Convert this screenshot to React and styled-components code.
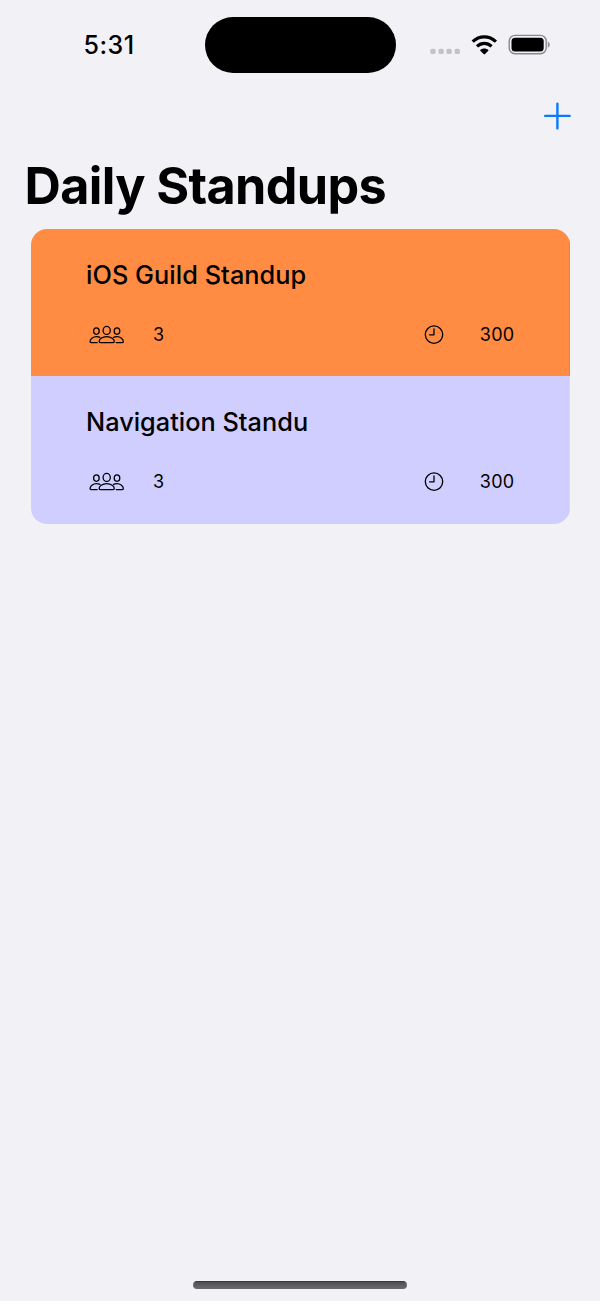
import React from "react";
import styled, { createGlobalStyle } from "styled-components";

const GlobalStyle = createGlobalStyle`
  * { box-sizing: border-box; }
  body { margin: 0; background: #f2f1f6; }
`;

const Screen = styled.main`
  display: flex;
  flex-direction: column;
  width: 600px;
  height: 1301px;
  overflow: hidden;
  background: #f2f1f6;
  color: #000;
  font-family: Inter, "Liberation Sans", sans-serif;
`;

const StatusBar = styled.header`
  display: flex;
  align-items: center;
  height: 90px;
  padding: 0 49px 0 83.5px;
`;

const Time = styled.time`
  width: 121px;
  font-size: 25px;
  line-height: 30px;
  font-weight: 540;
  letter-spacing: 0.5px;
  white-space: nowrap;
`;

const Island = styled.div`
  width: 191px;
  height: 56px;
  border-radius: 28px;
  background: #000;
`;

const StatusIcons = styled.svg`
  display: block;
  width: 122px;
  height: 24px;
  margin-left: auto;
`;

const Toolbar = styled.nav`
  display: flex;
  justify-content: flex-end;
  height: 70px;
  padding: 12px 28px 0 0;
`;

const AddButton = styled.button`
  display: block;
  width: 28px;
  height: 28px;
  padding: 0;
  border: 0;
  background: none;
  svg { display: block; }
`;

const Title = styled.h1`
  height: 69px;
  margin: 0;
  padding: 0 0 0 24.5px;
  font-size: 50.3px;
  line-height: 52px;
  font-weight: 670;
  letter-spacing: -0.64px;
  white-space: nowrap;
`;

const List = styled.section`
  margin: 0 30.5px;
  border-radius: 16px;
  overflow: hidden;
`;

const Card = styled.article`
  display: flex;
  flex-direction: column;
  justify-content: space-between;
  height: 147.3px;
  padding: 30px 55px 29.2px 55.5px;
  background: ${({ $color }) => $color};
  box-shadow: inset -1px 0 ${({ $edge }) => $edge};
`;

const CardTitle = styled.h2`
  margin: 0;
  font-size: 25.3px;
  line-height: 32px;
  font-weight: 550;
  letter-spacing: ${({ $tracking }) => $tracking}px;
  white-space: nowrap;
`;

const Details = styled.div`
  display: flex;
  justify-content: space-between;
  align-items: center;
  height: 24px;
  padding-left: 3px;
`;

const Label = styled.span`
  display: flex;
  align-items: center;
  gap: ${({ $gap }) => $gap}px;
  font-size: 18px;
  line-height: 24px;
  font-weight: 370;
  letter-spacing: 0.3px;
  svg { display: block; }
`;

const HomeArea = styled.footer`
  display: flex;
  justify-content: center;
  margin-top: auto;
  padding-bottom: 12px;
`;

const HomeIndicator = styled.div`
  width: 214px;
  height: 8px;
  border-radius: 4px;
  border: 1px solid #69696c;
  border-top-color: #39393b;
  background: linear-gradient(#505052, #68686a);
`;

function People() {
  return (
    <svg width="36" height="20" viewBox="0 0 36 20" fill="none" stroke="currentColor" strokeWidth="1.3" strokeLinejoin="round" strokeLinecap="round">
      <ellipse cx="17.7" cy="5.4" rx="3.6" ry="4" />
      <path d="M12 17.7q-1.9 0-1.9-1.2c0-2.2 3-4.9 7.6-4.9s7.6 2.7 7.6 4.9q0 1.2-1.9 1.2Z" />
      <ellipse cx="7.4" cy="6.1" rx="2.8" ry="3.2" />
      <ellipse cx="28" cy="6.1" rx="2.8" ry="3.2" />
      <path d="M8.2 17.6H2.3q-1.2 0-1.2-1.2c0-2.2 2.7-4.7 6.4-4.7q2 0 3.3.7M27.2 17.6h5.9q1.2 0 1.2-1.2c0-2.2-2.7-4.7-6.4-4.7q-2 0-3.3.7" />
    </svg>
  );
}

function Clock() {
  return (
    <svg width="20" height="20" viewBox="0 0 20 20" fill="none" stroke="currentColor" strokeLinecap="round" strokeLinejoin="round">
      <circle cx="10" cy="9.6" r="8.7" strokeWidth="1.35" />
      <path d="M10 4v5.8H5.6" strokeWidth="1.3" />
    </svg>
  );
}

function Status() {
  return (
    <StatusIcons viewBox="429 33 122 24" fill="none">
      <g fill="#c3c2c7">
        {[430.4, 438.5, 446.5, 454.7].map((x) => (
          <rect key={x} x={x} y="48.8" width="5.2" height="5.2" rx="1.5" />
        ))}
      </g>
      <g stroke="#000" strokeWidth="3.2">
        <path d="M472.7 41.7c6.7-6.5 16.5-6.5 23.2 0" />
        <path d="M477 46.3c4.3-4 10.3-4 14.6 0" />
      </g>
      <path d="M480.3 50c2.1-2 5.9-2 8 0q.4.4 0 .8l-3.3 3.2q-.7.6-1.4 0l-3.3-3.2q-.4-.4 0-.8Z" fill="#000" />
      <rect x="509.2" y="35.4" width="37" height="18.4" rx="5.8" stroke="#89898c" strokeWidth="1.4" />
      <rect x="511.5" y="37.7" width="32.2" height="13.8" rx="3.5" fill="#000" />
      <path d="M547.8 41.5q2 .9 2 3.1t-2 3.1Z" fill="#929196" />
    </StatusIcons>
  );
}

const standups = [
  { title: "iOS Guild Standup", color: "#ff8c42", edge: "#ff8412", attendees: 3, duration: 300, tracking: 0.06 },
  { title: "Navigation Standu", color: "#d0ceff", edge: "#d8d6ff", attendees: 3, duration: 300, tracking: 0.02 },
];

export default function App() {
  return (
    <Screen>
      <GlobalStyle />
      <StatusBar>
        <Time>5:31</Time>
        <Island />
        <Status />
      </StatusBar>
      <Toolbar>
        <AddButton aria-label="Add standup">
          <svg width="28" height="28" viewBox="0 0 28 28" stroke="#087aff" strokeWidth="2.4" strokeLinecap="round">
            <path d="M13.4 1.6v24.8M1.2 13.9h24.4" />
          </svg>
        </AddButton>
      </Toolbar>
      <Title>Daily Standups</Title>
      <List>
        {standups.map((item) => (
          <Card key={item.title} $color={item.color} $edge={item.edge}>
            <CardTitle $tracking={item.tracking}>{item.title}</CardTitle>
            <Details>
              <Label $gap={28}><People />{item.attendees}</Label>
              <Label $gap={36}><Clock />{item.duration}</Label>
            </Details>
          </Card>
        ))}
      </List>
      <HomeArea><HomeIndicator /></HomeArea>
    </Screen>
  );
}
